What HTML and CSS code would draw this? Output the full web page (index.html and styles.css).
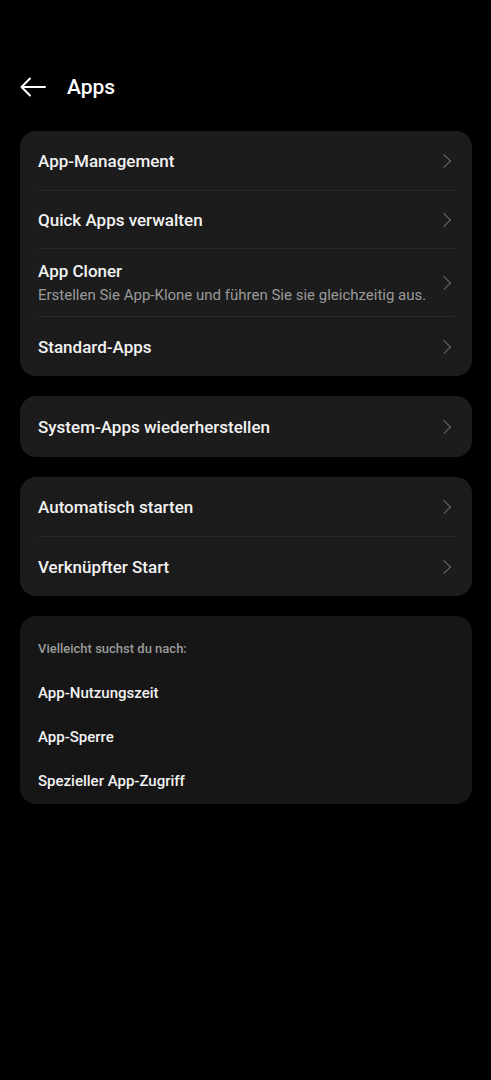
FILE: index.html
```html
<!DOCTYPE HTML>
<html>
  <head>
    <meta http-equiv="Content-type" content="text/html;charset=UTF-8">
    <title>Apps</title>
    <link rel="stylesheet" href="styles.css">
  </head>
  <body>
    <div class="header">
      <svg class="back" width="26" height="20" viewBox="0 0 26 20">
        <path d="M25 10H2M10 1.5L1.5 10L10 18.5" fill="none" stroke="#fff" stroke-width="2" stroke-linecap="round" stroke-linejoin="round"/>
      </svg>
      <h1>Apps</h1>
    </div>

    <div class="card">
      <div class="row">
        <div class="text"><div class="title">App-Management</div></div>
        <span class="chev"></span>
      </div>
      <div class="row">
        <div class="text"><div class="title">Quick Apps verwalten</div></div>
        <span class="chev"></span>
      </div>
      <div class="row tall">
        <div class="text">
          <div class="title">App Cloner</div>
          <div class="sub">Erstellen Sie App-Klone und führen Sie sie gleichzeitig aus.</div>
        </div>
        <span class="chev"></span>
      </div>
      <div class="row">
        <div class="text"><div class="title">Standard-Apps</div></div>
        <span class="chev"></span>
      </div>
    </div>

    <div class="card">
      <div class="row">
        <div class="text"><div class="title">System-Apps wiederherstellen</div></div>
        <span class="chev"></span>
      </div>
    </div>

    <div class="card">
      <div class="row">
        <div class="text"><div class="title">Automatisch starten</div></div>
        <span class="chev"></span>
      </div>
      <div class="row">
        <div class="text"><div class="title">Verknüpfter Start</div></div>
        <span class="chev"></span>
      </div>
    </div>

    <div class="card suggest">
      <div class="hint">Vielleicht suchst du nach:</div>
      <div class="link">App-Nutzungszeit</div>
      <div class="link">App-Sperre</div>
      <div class="link">Spezieller App-Zugriff</div>
    </div>
  </body>
</html>
```

FILE: styles.css
```css
html, body {
  background: #000;
  color: #fff;
  font-family: Roboto, "Noto Sans", sans-serif;
  margin: 0;
}
body {
  padding: 0 19px 20px 20px;
}
.header {
  display: flex;
  align-items: center;
  height: 44px;
  margin-top: 65px;
  margin-bottom: 22px;
}
.back {
  margin-right: 21px;
}
h1 {
  font-size: 21px;
  font-weight: 500;
  margin: 0;
}
.card {
  background: #1c1c1c;
  border-radius: 16px;
  padding: 0 18px;
  margin-bottom: 20px;
}
.row {
  box-sizing: border-box;
  display: flex;
  align-items: center;
  height: 58px;
  border-top: 1px solid #2a2a2a;
}
.row:first-child {
  border-top: none;
  height: 59px;
}
.row.tall {
  height: 68px;
}
.row:last-child {
  height: 60px;
}
.row:only-child {
  height: 61px;
}
.text {
  flex: 1;
}
.title {
  font-size: 17px;
  font-weight: 500;
  color: #f2f2f2;
}
.sub {
  font-size: 15px;
  color: #9a9a9a;
  margin-top: 5px;
}
.chev {
  width: 9px;
  height: 9px;
  border-top: 1.6px solid #6c6c6c;
  border-right: 1.6px solid #6c6c6c;
  transform: rotate(45deg);
  margin-right: 5px;
}
.suggest {
  background: #161616;
  padding-top: 24px;
  padding-bottom: 1px;
}
.hint {
  font-size: 13px;
  line-height: 18px;
  color: #9a9a9a;
  font-weight: 500;
  margin-bottom: 13px;
}
.link {
  font-size: 15px;
  font-weight: 500;
  color: #f2f2f2;
  height: 44px;
  display: flex;
  align-items: center;
}
```
